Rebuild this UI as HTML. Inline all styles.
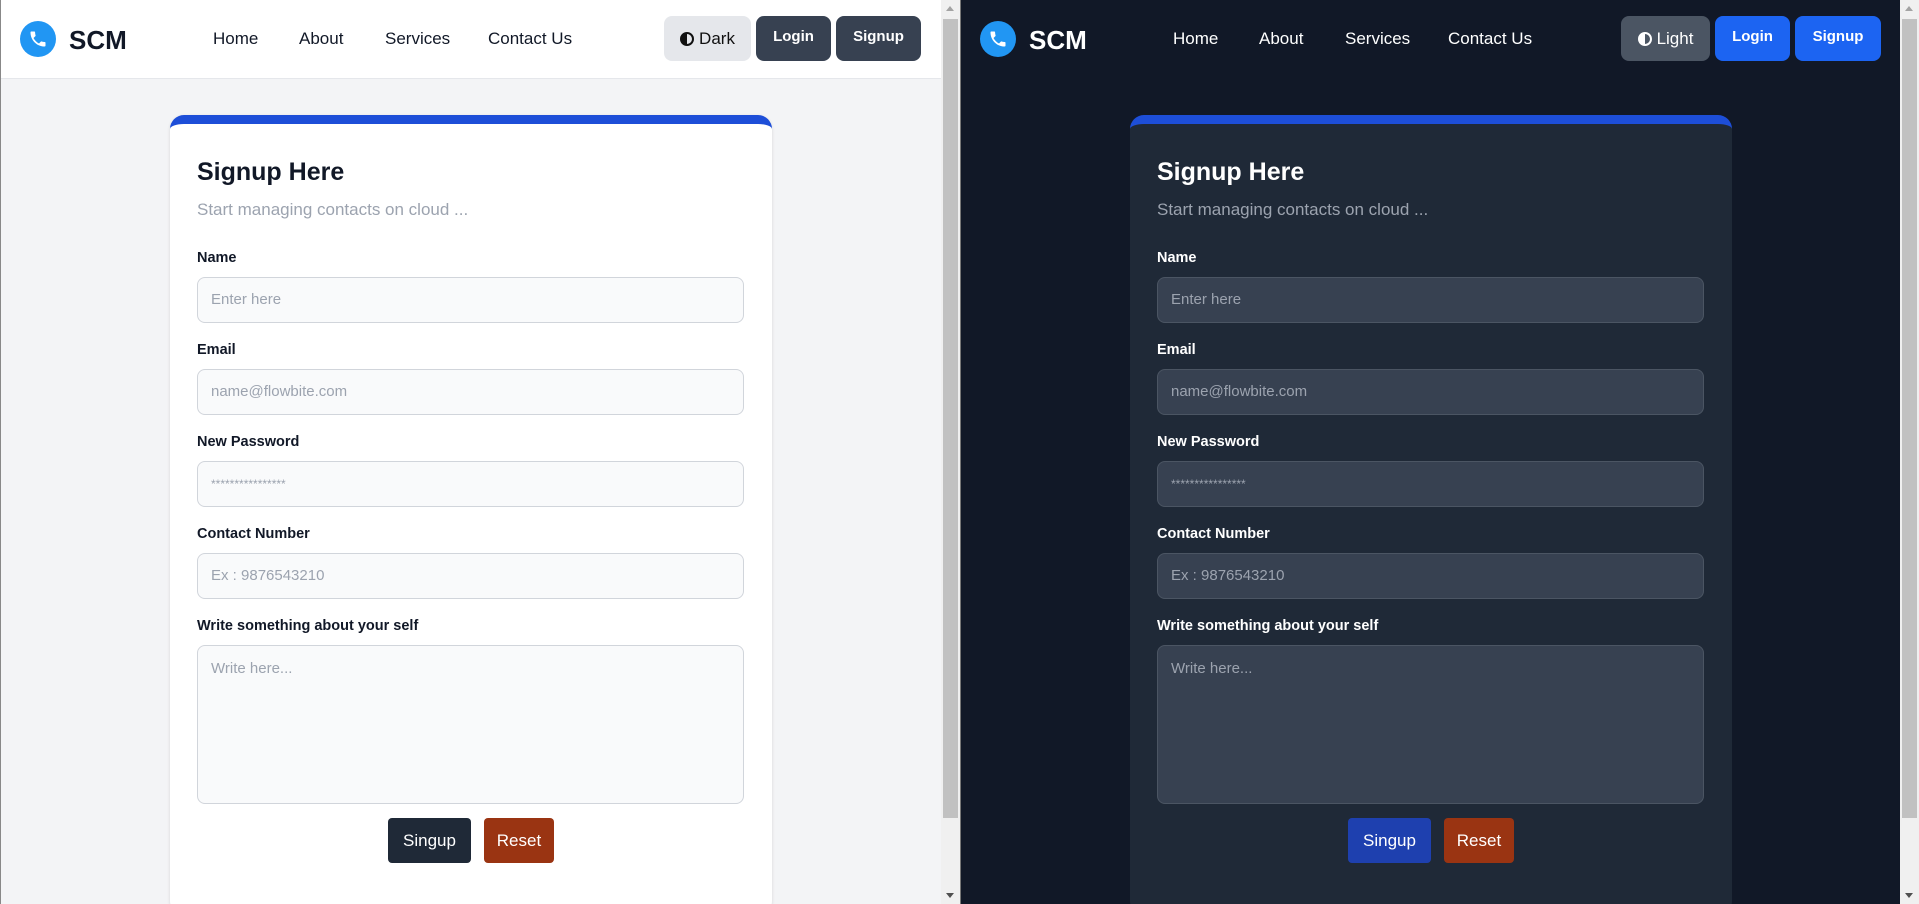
<!DOCTYPE html>
<html><head><meta charset="utf-8">
<style>
*{box-sizing:border-box;margin:0;padding:0}
body{width:1919px;height:904px;overflow:hidden;position:relative;font-family:"Liberation Sans",sans-serif;background:#777}
.pane{position:absolute;top:0;width:941px;height:904px;overflow:hidden}
.L{left:0;background:#f3f4f6;border-left:1px solid #888}
.R{left:961px;width:939px;background:#111827}
.nav{position:absolute;left:0;top:0;width:100%;height:79px}
.L .nav{background:#fff;border-bottom:1px solid #e5e7eb}
.logo{position:absolute;left:19px;top:21px;width:36px;height:36px;border-radius:50%;background:#2196f3}
.logo svg{position:absolute;left:8px;top:8px}
.scm{position:absolute;left:68px;top:25px;font-size:26px;line-height:30px;font-weight:bold}
.lk{position:absolute;top:28px;font-size:17px;line-height:22px}
.L .scm,.L .lk{color:#111827}
.R .scm,.R .lk{color:#fff}
.btn{position:absolute;top:16px;height:45px;border-radius:8px;text-align:center;line-height:45px}
.tg{font-size:17px}
.tg i{display:inline-block;width:14px;height:14px;border-radius:50%;border:2px solid;vertical-align:-2px;margin-right:5px;background:linear-gradient(90deg,currentColor 50%,transparent 50%)}
.b2{font-size:15px;font-weight:bold;color:#fff;line-height:42px}
.L .tg{background:#e5e7eb;color:#111}
.R .tg{background:#4b5563;color:#fff}
.L .b2{background:#374151}
.R .b2{background:#1c64f2}
.card{position:absolute;left:169px;top:115px;width:602px;height:800px;border-radius:14px;border-top:9px solid #1d4ed8}
.L .card{background:#fff;box-shadow:0 1px 3px rgba(0,0,0,.12)}
.R .card{background:#1f2937}
.card *{position:absolute}
h1{left:27px;top:33px;font-size:25px;font-weight:bold;line-height:30px}
.sub{left:27px;top:75px;font-size:17px;color:#9ca3af;line-height:22px}
.lb{left:27px;font-size:14.5px;font-weight:bold;line-height:18px}
.L h1,.L .lb{color:#111827}
.R h1,.R .lb{color:#fff}
.in{left:27px;width:547px;height:46px;border-radius:8px;border:1px solid;font-size:15px;padding-left:13px;line-height:44px;color:#9ca3af}
.L .in{background:#f9fafb;border-color:#d1d5db}
.R .in{background:#374151;border-color:#4b5563}
.ta{height:159px;line-height:20px;padding-top:13px}
.sb{top:694px;height:45px;border-radius:4px;color:#fff;font-size:17px;text-align:center;line-height:45px}
.scr{position:absolute;top:0;width:19px;height:904px;background:#f0f0f0}
.scr .th{position:absolute;left:2px;top:19px;width:15px;height:799px;background:#c1c1c1}
.scr .u,.scr .d{position:absolute;left:5px;width:0;height:0;border-left:4px solid transparent;border-right:4px solid transparent}
.scr .u{top:6px;border-bottom:5px solid #a3a3a3}
.scr .d{bottom:6px;border-top:5px solid #505050}
</style></head><body>

<div class="pane L">
 <div class="nav">
  <div class="logo"><svg width="20" height="20" viewBox="0 0 24 24"><path fill="#fff" d="M6.6 10.8c1.4 2.8 3.8 5.1 6.6 6.6l2.2-2.2c.3-.3.7-.4 1-.2 1.1.4 2.3.6 3.6.6.6 0 1 .4 1 1V20c0 .6-.4 1-1 1C10.6 21 3 13.4 3 4c0-.6.4-1 1-1h3.5c.6 0 1 .4 1 1 0 1.3.2 2.5.6 3.6.1.3 0 .7-.2 1z"/></svg></div>
  <div class="scm">SCM</div>
  <div class="lk" style="left:212px">Home</div>
  <div class="lk" style="left:298px">About</div>
  <div class="lk" style="left:384px">Services</div>
  <div class="lk" style="left:487px">Contact Us</div>
  <div class="btn tg" style="left:663px;width:87px"><i></i>Dark</div>
  <div class="btn b2" style="left:755px;width:75px">Login</div>
  <div class="btn b2" style="left:835px;width:85px">Signup</div>
 </div>
 <div class="card">
  <h1>Signup Here</h1>
  <div class="sub">Start managing contacts on cloud ...</div>
  <div class="lb" style="top:125px">Name</div>
  <div class="in" style="top:153px">Enter here</div>
  <div class="lb" style="top:217px">Email</div>
  <div class="in" style="top:245px">name@flowbite.com</div>
  <div class="lb" style="top:309px">New Password</div>
  <div class="in" style="top:337px;font-size:12px">****************</div>
  <div class="lb" style="top:401px">Contact Number</div>
  <div class="in" style="top:429px">Ex : 9876543210</div>
  <div class="lb" style="top:493px">Write something about your self</div>
  <div class="in ta" style="top:521px">Write here...</div>
  <div class="sb" style="left:218px;width:83px;background:#1f2937">Singup</div>
  <div class="sb" style="left:314px;width:70px;background:#9a3412">Reset</div>
 </div>
</div>
<div class="scr" style="left:941px"><div class="u"></div><div class="th"></div><div class="d"></div></div>

<div class="pane R">
 <div class="nav">
  <div class="logo"><svg width="20" height="20" viewBox="0 0 24 24"><path fill="#fff" d="M6.6 10.8c1.4 2.8 3.8 5.1 6.6 6.6l2.2-2.2c.3-.3.7-.4 1-.2 1.1.4 2.3.6 3.6.6.6 0 1 .4 1 1V20c0 .6-.4 1-1 1C10.6 21 3 13.4 3 4c0-.6.4-1 1-1h3.5c.6 0 1 .4 1 1 0 1.3.2 2.5.6 3.6.1.3 0 .7-.2 1z"/></svg></div>
  <div class="scm">SCM</div>
  <div class="lk" style="left:212px">Home</div>
  <div class="lk" style="left:298px">About</div>
  <div class="lk" style="left:384px">Services</div>
  <div class="lk" style="left:487px">Contact Us</div>
  <div class="btn tg" style="left:660px;width:89px"><i></i>Light</div>
  <div class="btn b2" style="left:754px;width:75px">Login</div>
  <div class="btn b2" style="left:834px;width:86px">Signup</div>
 </div>
 <div class="card">
  <h1>Signup Here</h1>
  <div class="sub">Start managing contacts on cloud ...</div>
  <div class="lb" style="top:125px">Name</div>
  <div class="in" style="top:153px">Enter here</div>
  <div class="lb" style="top:217px">Email</div>
  <div class="in" style="top:245px">name@flowbite.com</div>
  <div class="lb" style="top:309px">New Password</div>
  <div class="in" style="top:337px;font-size:12px">****************</div>
  <div class="lb" style="top:401px">Contact Number</div>
  <div class="in" style="top:429px">Ex : 9876543210</div>
  <div class="lb" style="top:493px">Write something about your self</div>
  <div class="in ta" style="top:521px">Write here...</div>
  <div class="sb" style="left:218px;width:83px;background:#1e40af">Singup</div>
  <div class="sb" style="left:314px;width:70px;background:#9a3412">Reset</div>
 </div>
</div>
<div class="scr" style="left:1900px"><div class="u"></div><div class="th"></div><div class="d"></div></div>
</body></html>
